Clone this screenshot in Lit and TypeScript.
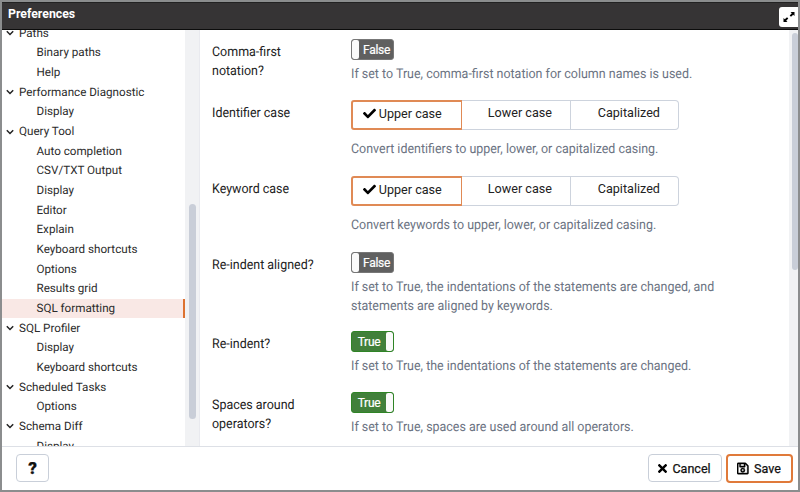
import { LitElement, html, css, svg } from "lit";
import { customElement, property } from "lit/decorators.js";

type TreeRow = { text: string; group?: boolean; selected?: boolean };

const TREE: TreeRow[] = [
  { text: "Paths", group: true },
  { text: "Binary paths" },
  { text: "Help" },
  { text: "Performance Diagnostic", group: true },
  { text: "Display" },
  { text: "Query Tool", group: true },
  { text: "Auto completion" },
  { text: "CSV/TXT Output" },
  { text: "Display" },
  { text: "Editor" },
  { text: "Explain" },
  { text: "Keyboard shortcuts" },
  { text: "Options" },
  { text: "Results grid" },
  { text: "SQL formatting", selected: true },
  { text: "SQL Profiler", group: true },
  { text: "Display" },
  { text: "Keyboard shortcuts" },
  { text: "Scheduled Tasks", group: true },
  { text: "Options" },
  { text: "Schema Diff", group: true },
  { text: "Display" },
];

const icon = (cls: string, box: string, d: string) =>
  html`<svg class=${cls} viewBox=${box} aria-hidden="true">${svg`<path d=${d}></path>`}</svg>`;

const CHECK =
  "M173.9 439.4L7.5 273c-10-10-10-26.200 0-36.200l36.200-36.200c10-10 26.200-10 36.200 0L192 312.700 432.100 72.600c10-10 26.200-10 36.200 0l36.200 36.200c10 10 10 26.200 0 36.200L210.100 439.400c-10 10-26.200 10-36.200 0z";
const CROSS =
  "M243 256l100-100c12-12 12-32 0-44l-22-22c-12-12-32-12-44 0L176 190 76 90c-12-12-32-12-44 0L9 112c-12 12-12 32 0 44l100 100L9 356c-12 12-12 32 0 44l23 22c12 12 32 12 44 0l100-100 101 100c12 12 32 12 44 0l22-22c12-12 12-32 0-44z";
const FLOPPY =
  "M434 130L350 46a48 48 0 0 0-34-14H48A48 48 0 0 0 0 80v352a48 48 0 0 0 48 48h352a48 48 0 0 0 48-48V164a48 48 0 0 0-14-34zM272 80v80H144V80zM394 432H54a6 6 0 0 1-6-6V86a6 6 0 0 1 6-6h42v104a24 24 0 0 0 24 24h176a24 24 0 0 0 24-24V84l78 78a6 6 0 0 1 2 4v260a6 6 0 0 1-6 6zM224 232a88 88 0 1 0 0 176 88 88 0 0 0 0-176zm0 128a40 40 0 1 1 0-80 40 40 0 0 1 0 80z";

@customElement("pref-switch")
export class PrefSwitch extends LitElement {
  @property({ type: Boolean, reflect: true }) on = false;

  static styles = css`
    :host {
      display: block;
    }
    .switch {
      box-sizing: border-box;
      display: flex;
      width: 43px;
      height: 21px;
      border: 1px solid #777;
      border-radius: 3px;
      overflow: hidden;
      background: #606060;
      color: #fff;
      font-size: 12px;
      line-height: 20px;
      letter-spacing: -0.3px;
      -webkit-text-stroke: 0.2px #fff;
    }
    .text {
      flex: 1;
      text-align: center;
      padding-left: 2px;
    }
    .knob {
      width: 7px;
      background: #fafafa;
      border-radius: 2px;
    }
    :host([on]) .switch {
      flex-direction: row-reverse;
      background: #41803a;
      border-color: #2f8426;
    }
    :host([on]) .text {
      padding-left: 1px;
    }
  `;

  render() {
    return html`<div class="switch">
      <div class="knob"></div>
      <div class="text">${this.on ? "True" : "False"}</div>
    </div>`;
  }
}

@customElement("case-picker")
export class CasePicker extends LitElement {
  static styles = css`
    :host {
      display: block;
    }
    .group {
      display: flex;
      width: 328px;
      height: 30px;
    }
    .option {
      box-sizing: border-box;
      width: 109px;
      border: 1px solid #cdd3dd;
      border-left: 0;
      display: flex;
      align-items: center;
      justify-content: center;
      padding: 0 0 3px 9px;
      font-size: 13.300px;
      line-height: 18px;
      color: #222;
    }
    .option span {
      transform: scaleX(0.947);
    }
    .option:last-child {
      width: 108px;
      border-radius: 0 4px 4px 0;
    }
    .option.active {
      width: 111px;
      border: 2px solid #e08a55;
      border-radius: 3px 0 0 3px;
      border-right-width: 1px;
      padding: 0 6px 2px 0;
    }
    .check {
      width: 13px;
      height: 13px;
      fill: #000;
      margin-right: 1px;
    }
  `;

  render() {
    return html`<div class="group">
      <div class="option active">${icon("check", "0 0 512 512", CHECK)}<span>Upper case</span></div>
      <div class="option"><span>Lower case</span></div>
      <div class="option"><span>Capitalized</span></div>
    </div>`;
  }
}

@customElement("app-root")
export class AppRoot extends LitElement {
  static styles = css`
    :host {
      display: block;
      font-family: Roboto, "Liberation Sans", sans-serif;
      color: #222;
    }
    .dialog {
      box-sizing: border-box;
      width: 800px;
      height: 492px;
      border: 2px solid #8b8d8e;
      background: #fff;
      display: flex;
      flex-direction: column;
      overflow: hidden;
    }
    .header {
      box-sizing: border-box;
      height: 28px;
      flex: none;
      background: #363435;
      border-top: 1px solid #222;
      border-bottom: 1.5px solid #0c0c0c;
      display: flex;
      align-items: center;
      justify-content: space-between;
      padding-left: 6px;
    }
    .title {
      color: #fff;
      font-size: 13.300px;
      font-weight: 700;
      line-height: 18px;
      padding-bottom: 4px;
      transform: scaleX(0.925);
      transform-origin: left;
    }
    .expand {
      width: 19px;
      height: 20px;
      margin-top: 1px;
      background: #fff;
      border-radius: 3px 0 0 3px;
      display: flex;
      align-items: center;
      justify-content: center;
    }
    .arrows {
      width: 12px;
      height: 12px;
      fill: #000;
    }
    .body {
      height: 416px;
      flex: none;
      display: flex;
      overflow: hidden;
    }
    .tree {
      width: 183px;
      flex: none;
      overflow: hidden;
    }
    .rows {
      margin-top: -6.500px;
    }
    .row {
      box-sizing: border-box;
      height: 19.66px;
      display: flex;
      align-items: center;
      padding-left: 34.500px;
      font-size: 11.650px;
      text-rendering: geometricPrecision;
      line-height: 19px;
      white-space: nowrap;
      color: #2c2c2c;
    }
    .row.group {
      padding-left: 4px;
      gap: 5px;
    }
    .row.selected {
      background: #f9e8e5;
      border-right: 2.5px solid #dd7230;
    }
    .chevron {
      width: 8px;
      height: 8px;
      fill: none;
      stroke: #222;
      stroke-width: 1.5;
    }
    .track {
      flex: none;
      background: #f1f2f4;
      display: flex;
      flex-direction: column;
    }
    .track.left {
      width: 14px;
      align-items: center;
    }
    .track.right {
      width: 9px;
      align-items: flex-end;
      margin-left: auto;
    }
    .thumb {
      width: 7px;
      background: #c9ced8;
      border-radius: 4px;
    }
    .left .thumb {
      height: 215px;
      margin-top: 174px;
    }
    .right .thumb {
      width: 6px;
      height: 237px;
      margin-top: 3px;
      border-radius: 3px;
    }
    .split {
      width: 1px;
      margin-right: 1px;
      flex: none;
      background: #e9eaef;
    }
    .form {
      padding: 8.500px 0 0 11px;
      display: grid;
      grid-template-rows: 61px 76px 76px 79.5px 60.5px 60px;
    }
    .field {
      display: grid;
      grid-template-columns: 138.500px 400px;
    }
    .label,
    .help {
      font-size: 13.300px;
      line-height: 19px;
      transform: scaleX(0.937);
      transform-origin: left;
      text-rendering: geometricPrecision;
    }
    .label {
      padding-top: 4px;
      width: 120px;
    }
    .help {
      width: 425px;
      color: #6b7382;
      margin-top: 5px;
    }
    .help.far {
      margin-top: 10.500px;
    }
    .footer {
      flex: 1;
      border-top: 1px solid #dde0e6;
      display: flex;
      align-items: center;
      gap: 4px;
      padding: 0 5px 1px 14px;
    }
    .button {
      box-sizing: border-box;
      height: 28px;
      border: 1px solid #c9cfd9;
      border-radius: 4px;
      display: flex;
      align-items: center;
      justify-content: center;
      gap: 4px;
      font-size: 13.500px;
      color: #111;
      -webkit-text-stroke: 0.25px #111;
    }
    .button span {
      transform: scaleX(0.93);
    }
    .query {
      width: 33px;
      font-size: 17px;
      font-weight: 900;
      margin-right: auto;
    }
    .cancel {
      width: 74px;
    }
    .save {
      width: 67px;
      height: 29px;
      border: 2px solid #e07a3a;
    }
    .cross {
      width: 9px;
      height: 13px;
    }
    .floppy {
      width: 11.500px;
      height: 13px;
      stroke: #000;
      stroke-width: 16;
    }
  `;

  private field(label: unknown, control: unknown, help: unknown, far = false) {
    return html`<div class="field">
      <div class="label">${label}</div>
      <div>
        ${control}
        <div class="help ${far ? "far" : ""}">${help}</div>
      </div>
    </div>`;
  }

  render() {
    const off = html`<pref-switch></pref-switch>`;
    const on = html`<pref-switch on></pref-switch>`;
    const cases = html`<case-picker></case-picker>`;
    return html`<div class="dialog">
      <div class="header">
        <div class="title">Preferences</div>
        <div class="expand">
          ${icon("arrows", "0 0 12 12", "M7.500 1H11.500V5L10.200 3.700 8 5.800 6.700 4.500 8.800 2.300zM4.500 11H.5V7L1.800 8.300 4 6.200 5.300 7.500 3.200 9.700z")}
        </div>
      </div>
      <div class="body">
        <div class="tree">
          <div class="rows">
            ${TREE.map(
              (r) => html`<div class="row ${r.group ? "group" : ""} ${r.selected ? "selected" : ""}">
                ${r.group ? icon("chevron", "0 0 8 8", "M.8 2.300L4 5.500 7.200 2.300") : ""}<span>${r.text}</span>
              </div>`
            )}
          </div>
        </div>
        <div class="track left"><div class="thumb"></div></div>
        <div class="split"></div>
        <div class="form">
          ${this.field("Comma-first notation?", off, "If set to True, comma-first notation for column names is used.")}
          ${this.field("Identifier case", cases, "Convert identifiers to upper, lower, or capitalized casing.", true)}
          ${this.field("Keyword case", cases, "Convert keywords to upper, lower, or capitalized casing.", true)}
          ${this.field("Re-indent aligned?", off, html`If set to True, the indentations of the statements are changed, and<br />statements are aligned by keywords.`)}
          ${this.field("Re-indent?", on, "If set to True, the indentations of the statements are changed.")}
          ${this.field("Spaces around operators?", on, "If set to True, spaces are used around all operators.")}
        </div>
        <div class="track right"><div class="thumb"></div></div>
      </div>
      <div class="footer">
        <div class="button query">?</div>
        <div class="button cancel">${icon("cross", "0 80 352 352", CROSS)}<span>Cancel</span></div>
        <div class="button save">${icon("floppy", "0 32 448 448", FLOPPY)}<span>Save</span></div>
      </div>
    </div>`;
  }
}
